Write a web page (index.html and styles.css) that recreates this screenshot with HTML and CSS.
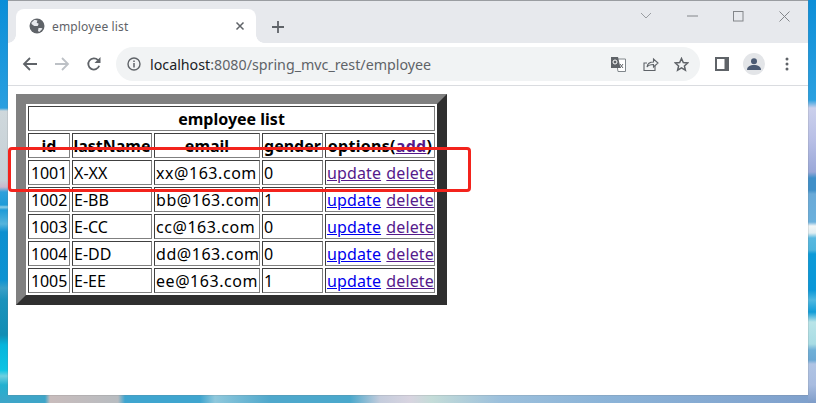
FILE: index.html
```html
<!DOCTYPE html>
<html lang="en">
<head>
<meta charset="utf-8">
<title>employee list</title>
<link rel="stylesheet" href="styles.css">
</head>
<body>
<div class="window">
  <div class="tabstrip">
    <div class="tab">
      <svg class="favicon" width="16" height="16" viewBox="0 0 16 16"><circle cx="8" cy="8" r="7.500" fill="#5f6368"/><path d="M2.500 4.500L5.500 1.800l3 .7-.8 2.200 2 1-1 2.300H5.200L2.500 6zM9.500 10h3l1 .8-3.300 3.200-1.200-1z" fill="#e8eaed"/></svg>
      <span class="tab-title">employee list</span>
      <svg class="tab-close" width="10" height="10" viewBox="0 0 10 10"><path d="M1.500 1.500l7 7M8.500 1.500l-7 7" stroke="#5f6368" stroke-width="1.500" fill="none"/></svg>
    </div>
    <svg class="newtab" width="14" height="14" viewBox="0 0 14 14"><path d="M7 1v12M1 7h12" stroke="#5f6368" stroke-width="1.800" fill="none"/></svg>
    <div class="wincontrols">
      <svg width="12" height="8" viewBox="0 0 12 8"><path d="M1 1l5 5 5-5" stroke="#9a9da1" stroke-width="1" fill="none"/></svg>
      <svg width="11" height="2" viewBox="0 0 11 2"><path d="M0 1h11" stroke="#83868a" stroke-width="1" fill="none"/></svg>
      <svg width="11" height="11" viewBox="0 0 11 11"><rect x=".5" y=".5" width="9.500" height="9.500" stroke="#83868a" fill="none"/></svg>
      <svg width="11" height="11" viewBox="0 0 11 11"><path d="M.5.5l10 10M10.500.5l-10 10" stroke="#83868a" fill="none"/></svg>
    </div>
  </div>
  <div class="toolbar">
    <svg class="nav nav-back" width="16" height="16" viewBox="0 0 16 16"><path d="M15 8H2M8 2L2 8l6 6" stroke="#5f6368" stroke-width="1.800" fill="none"/></svg>
    <svg class="nav nav-forward" width="16" height="16" viewBox="0 0 16 16"><path d="M1 8h13M8 2l6 6-6 6" stroke="#bdc1c6" stroke-width="1.800" fill="none"/></svg>
    <svg class="nav nav-reload" width="16" height="16" viewBox="0 0 16 16"><path d="M13.200 9.800A5.600 5.600 0 1 1 12 4.100" stroke="#5f6368" stroke-width="1.800" fill="none"/><path d="M14.500 1v6h-6z" fill="#5f6368"/></svg>
    <div class="omnibox">
      <svg class="info" width="14" height="14" viewBox="0 0 14 14"><circle cx="7" cy="7" r="6" stroke="#5f6368" stroke-width="1.400" fill="none"/><path d="M7 6v4.400M7 3.400v1.500" stroke="#5f6368" stroke-width="1.500" fill="none"/></svg>
      <span class="url"><span class="host">localhost</span>:8080/spring_mvc_rest/employee</span>
      <svg class="translate" width="16" height="16" viewBox="0 0 16 16"><path d="M6 3h9.500v12.500H8z" fill="#fff" stroke="#80868b"/><path d="M1 1h7l2.500 11H1z" fill="#5f6368"/><circle cx="5" cy="6" r="2" fill="none" stroke="#fff"/><path d="M10 8l3 4M13 8l-3 4" stroke="#5f6368"/></svg>
      <svg class="share" width="16" height="16" viewBox="0 0 16 16"><path d="M12 9.500V14.500H1V7h3" stroke="#5f6368" stroke-width="1.100" fill="none"/><path d="M4 11c.5-3.500 3-5 6.500-5V3L15 7l-4.500 4V8.500C8 8.500 5.500 9 4 11z" stroke="#5f6368" stroke-width="1.100" fill="#f1f3f4"/></svg>
      <svg class="star" width="15" height="15" viewBox="0 0 15 15"><path d="M7.500 1.500l1.800 4.100 4.400.4-3.300 2.900 1 4.300-3.900-2.300-3.900 2.300 1-4.300L1.300 6l4.400-.4z" stroke="#5f6368" stroke-width="1.500" fill="none"/></svg>
    </div>
    <svg class="sidepanel" width="14" height="14" viewBox="0 0 14 14"><rect width="14" height="14" fill="#5f6368"/><rect x="2" y="2" width="7.500" height="10" fill="#fff"/></svg>
    <div class="avatar"><svg width="14" height="12" viewBox="0 0 14 12"><circle cx="7" cy="3.200" r="3" fill="#4b5a73"/><path d="M0 12c0-3.500 3-5 7-5s7 1.500 7 5z" fill="#4b5a73"/></svg></div>
    <svg class="kebab" width="4" height="14" viewBox="0 0 4 14"><circle cx="2" cy="2" r="1.500" fill="#5f6368"/><circle cx="2" cy="7" r="1.500" fill="#5f6368"/><circle cx="2" cy="12" r="1.500" fill="#5f6368"/></svg>
  </div>
  <main class="content">
    <table class="emp">
      <colgroup><col class="c1"><col class="c2"><col class="c3"><col class="c4"><col class="c5"></colgroup>
      <tr><th colspan="5">employee list</th></tr>
      <tr><th>id</th><th>lastName</th><th>email</th><th>gender</th><th class="opts-head">options(<a class="visited" href="#">add</a>)</th></tr>
      <tr><td class="num">1001</td><td>X-XX</td><td class="mail">xx@163.com</td><td>0</td><td class="opts"><a class="visited" href="#">update</a> <a class="visited" href="#">delete</a></td></tr>
      <tr><td class="num">1002</td><td>E-BB</td><td class="mail">bb@163.com</td><td>1</td><td class="opts"><a href="#">update</a> <a class="visited" href="#">delete</a></td></tr>
      <tr><td class="num">1003</td><td>E-CC</td><td class="mail">cc@163.com</td><td>0</td><td class="opts"><a href="#">update</a> <a class="visited" href="#">delete</a></td></tr>
      <tr><td class="num">1004</td><td>E-DD</td><td class="mail">dd@163.com</td><td>0</td><td class="opts"><a href="#">update</a> <a class="visited" href="#">delete</a></td></tr>
      <tr><td class="num">1005</td><td>E-EE</td><td class="mail">ee@163.com</td><td>1</td><td class="opts"><a href="#">update</a> <a class="visited" href="#">delete</a></td></tr>
    </table>
  </main>
</div>
<div class="highlight"></div>
</body>
</html>
```
FILE: styles.css
```css
* { box-sizing: border-box; }
html, body { margin: 0; height: 403px; overflow: hidden; }
body {
  position: relative;
  padding: 0 8px 8px;
  font-family: "Noto Sans", "Open Sans", sans-serif;
  background-color: #3ea5cf;
  background-repeat: no-repeat;
  background-position: left top, right top, left bottom;
  background-size: 8px 100%, 8px 100%, 100% 8px;
  background-image:
    linear-gradient(180deg, #0a8ed8 0, #2a9fe0 108px, #cfd8dc 111px, #c6d0d6 180px, #c9b8cc 187px, #2fa0dc 192px, #1d9bd8 205px, #8ccde6 207px, #1d9bd8 210px, #55b4dc 224px, #0c8fd0 232px, #0d93d2 280px, #3aa0c8 288px, #1b92bc 300px, #128db4 335px, #06b5dc 345px, #0cc4e4 370px, #6fd0e0 376px, #22b0d0 385px, #3ea5c8 403px),
    linear-gradient(180deg, #0d8ed8 0, #2ba0e0 100px, #cbd0ec 108px, #b8bfe6 140px, #9aa8d8 172px, #3f8fc8 178px, #3f8fc8 190px, #6aaad8 194px, #6ab0dc 222px, #f2f6f6 226px, #e0eef2 233px, #58b8e0 238px, #4db4dc 250px, #0c9ad8 254px, #0a97d8 290px, #50b8e0 300px, #0f9cd8 312px, #b9e4e8 322px, #a8dce4 344px, #6fb0d8 350px, #6aa8d4 360px, #b0c4e4 364px, #a8bce0 385px, #7e9cc8 403px),
    linear-gradient(90deg, #3ea5c8 0, #3ea5c8 45px, #c8bcbc 50px, #b8bcc0 118px, #3fa5cf 125px, #3fa5cf 200px, #8fc8dc 215px, #4fa8cc 270px, #4aa8cc 350px, #c4ccdc 380px, #d8d4e0 410px, #c4dcd8 432px, #9cc0dc 500px, #8cb4d8 600px, #7fa0cc 816px);
}
.window {
  height: 395px;
  display: flex;
  flex-direction: column;
  background: #fff;
  border-top: 1px solid #9a9da1;
  box-shadow: 0 0 1px #777;
}
.tabstrip {
  height: 42px;
  flex: none;
  display: flex;
  align-items: flex-start;
  background: #e7e9ed;
}
.tab {
  position: relative;
  width: 240px;
  height: 34px;
  margin: 8px 0 0 8px;
  padding: 0 0 0 13px;
  display: flex;
  align-items: center;
  background: #fff;
  border-radius: 8px 8px 0 0;
}
.tab::before, .tab::after {
  content: "";
  position: absolute;
  bottom: 0;
  width: 8px;
  height: 8px;
}
.tab::before { left: -8px; background: radial-gradient(circle at 0 0, transparent 7.500px, #fff 8px); }
.tab::after { right: -8px; background: radial-gradient(circle at 100% 0, transparent 7.500px, #fff 8px); }
.favicon { flex: none; }
.tab-title { margin-left: 7px; font-size: 12px; color: #5f6368; letter-spacing: .15px; }
.tab-close { margin-left: auto; margin-right: 11px; }
.newtab { margin: 19px 0 0 15px; }
.wincontrols {
  margin-left: auto;
  height: 30px;
  display: flex;
  align-items: center;
  gap: 35px;
  padding-right: 18px;
}
.toolbar {
  height: 43px;
  flex: none;
  display: flex;
  align-items: center;
  background: #fff;
  border-bottom: 1px solid #dadce0;
}
.nav { flex: none; }
.nav-back { margin-left: 14px; }
.nav-forward { margin-left: 16px; }
.nav-reload { margin-left: 16px; }
.omnibox {
  width: 584px;
  height: 34px;
  margin-left: 14px;
  display: flex;
  align-items: center;
  background: #f1f3f4;
  border-radius: 17px;
  padding-left: 11px;
}
.url { margin-left: 9px; font-size: 14.250px; color: #5f6368; white-space: nowrap; }
.host { color: #202124; }
.translate { margin-left: auto; }
.share { margin-left: 17px; }
.star { margin-left: 15px; margin-right: 11px; }
.sidepanel { margin-left: 15px; }
.avatar {
  width: 22px;
  height: 22px;
  margin-left: 14px;
  border-radius: 50%;
  background: #e3e5e8;
  display: flex;
  align-items: center;
  justify-content: center;
}
.kebab { margin-left: 20px; }
.content { padding: 8px; }
.emp {
  border-collapse: separate;
  border-spacing: 2px;
  border: 10px solid;
  border-color: #808080 #2f2f2f #2f2f2f #808080;
  table-layout: fixed;
  width: 431px;
  color: #000;
  font-size: 16px;
  line-height: 22px;
}
.c1 { width: 42px; } .c2 { width: 80px; } .c3 { width: 106px; } .c4 { width: 61px; } .c5 { width: 110px; }
.emp th, .emp td {
  height: 25px;
  padding: 1px 0 0 1px;
  border: 1px solid;
  border-color: #404040 #808080 #808080 #404040;
  white-space: nowrap;
}
.emp th { text-align: center; font-weight: 700; padding-left: 0; }
.emp .num { padding-left: 2px; letter-spacing: -.1px; }
.emp .mail { letter-spacing: .55px; }
.emp .opts { letter-spacing: .12px; word-spacing: 1px; }
.emp .opts-head { letter-spacing: .3px; }
a { color: #0000ee; }
a.visited { color: #551a8b; }
.highlight {
  position: absolute;
  left: 8px;
  top: 147px;
  width: 463px;
  height: 45px;
  border: 3px solid #f3231c;
  border-radius: 4px;
}
```
